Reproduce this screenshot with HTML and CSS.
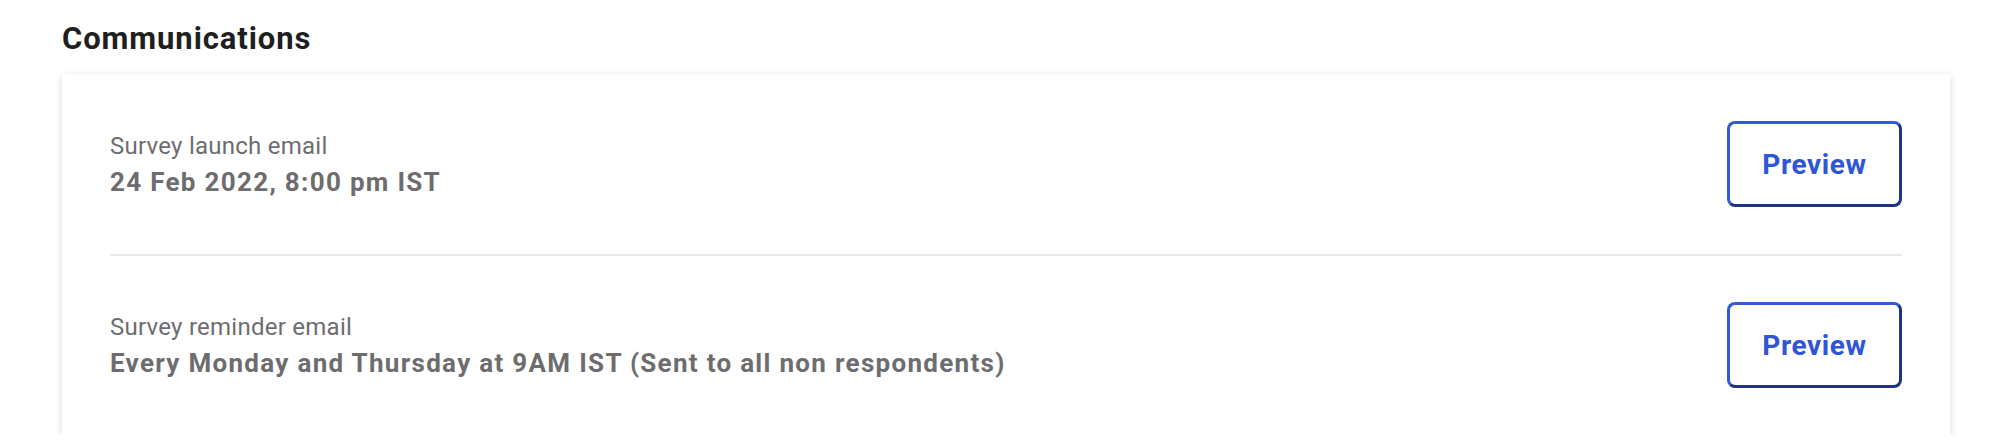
FILE: index.html
```html
<!DOCTYPE html>
<html lang="en">
<head>
<meta charset="utf-8">
<title>Communications</title>
<link rel="stylesheet" href="styles.css">
</head>
<body>
  <section class="comms">
    <h2 class="comms-title">Communications</h2>
    <div class="comms-card">
      <div class="comms-row">
        <div class="comms-info">
          <div class="comms-label">Survey launch email</div>
          <div class="comms-value">24 Feb 2022, 8:00 pm IST</div>
        </div>
        <button class="btn-preview" type="button">Preview</button>
      </div>
      <div class="comms-row">
        <div class="comms-info">
          <div class="comms-label">Survey reminder email</div>
          <div class="comms-value">Every Monday and Thursday at 9AM IST (Sent to all non respondents)</div>
        </div>
        <button class="btn-preview" type="button">Preview</button>
      </div>
    </div>
  </section>
</body>
</html>
```

FILE: styles.css
```css
* { box-sizing: border-box; }

html, body {
  margin: 0;
  padding: 0;
  background: #ffffff;
}

body {
  font-family: Roboto, "Liberation Sans", Arial, sans-serif;
}

.comms {
  padding: 19px 54px 0 62px;
}

.comms-title {
  margin: 0 0 15px 0;
  font-size: 31px;
  line-height: 40px;
  font-weight: 700;
  letter-spacing: 0.9px;
  color: #1f1f21;
}

.comms-card {
  background: #ffffff;
  box-shadow: 0 2px 8px rgba(0, 0, 0, 0.16);
  display: flex;
  flex-direction: column;
}

.comms-row {
  height: 180px;
  margin: 0 48px;
  display: flex;
  align-items: center;
  justify-content: space-between;
}

.comms-row + .comms-row {
  border-top: 2px solid #e8e7ee;
}

.comms-info {
  display: flex;
  flex-direction: column;
}

.comms-label {
  font-size: 24px;
  line-height: 36px;
  font-weight: 400;
  letter-spacing: 0.25px;
  color: #6d6d6f;
}

.comms-value {
  font-size: 26px;
  line-height: 36px;
  font-weight: 700;
  letter-spacing: 1.3px;
  color: #6d6d6f;
}

.btn-preview {
  width: 175px;
  height: 86px;
  background: #ffffff;
  border: 3px solid;
  border-color: #3259d8 #1f3383 #1f3383 #3259d8;
  border-radius: 8px;
  font-family: inherit;
  font-size: 28px;
  font-weight: 700;
  letter-spacing: 0.6px;
  color: #2f56d6;
  cursor: pointer;
  padding: 0;
}
```
